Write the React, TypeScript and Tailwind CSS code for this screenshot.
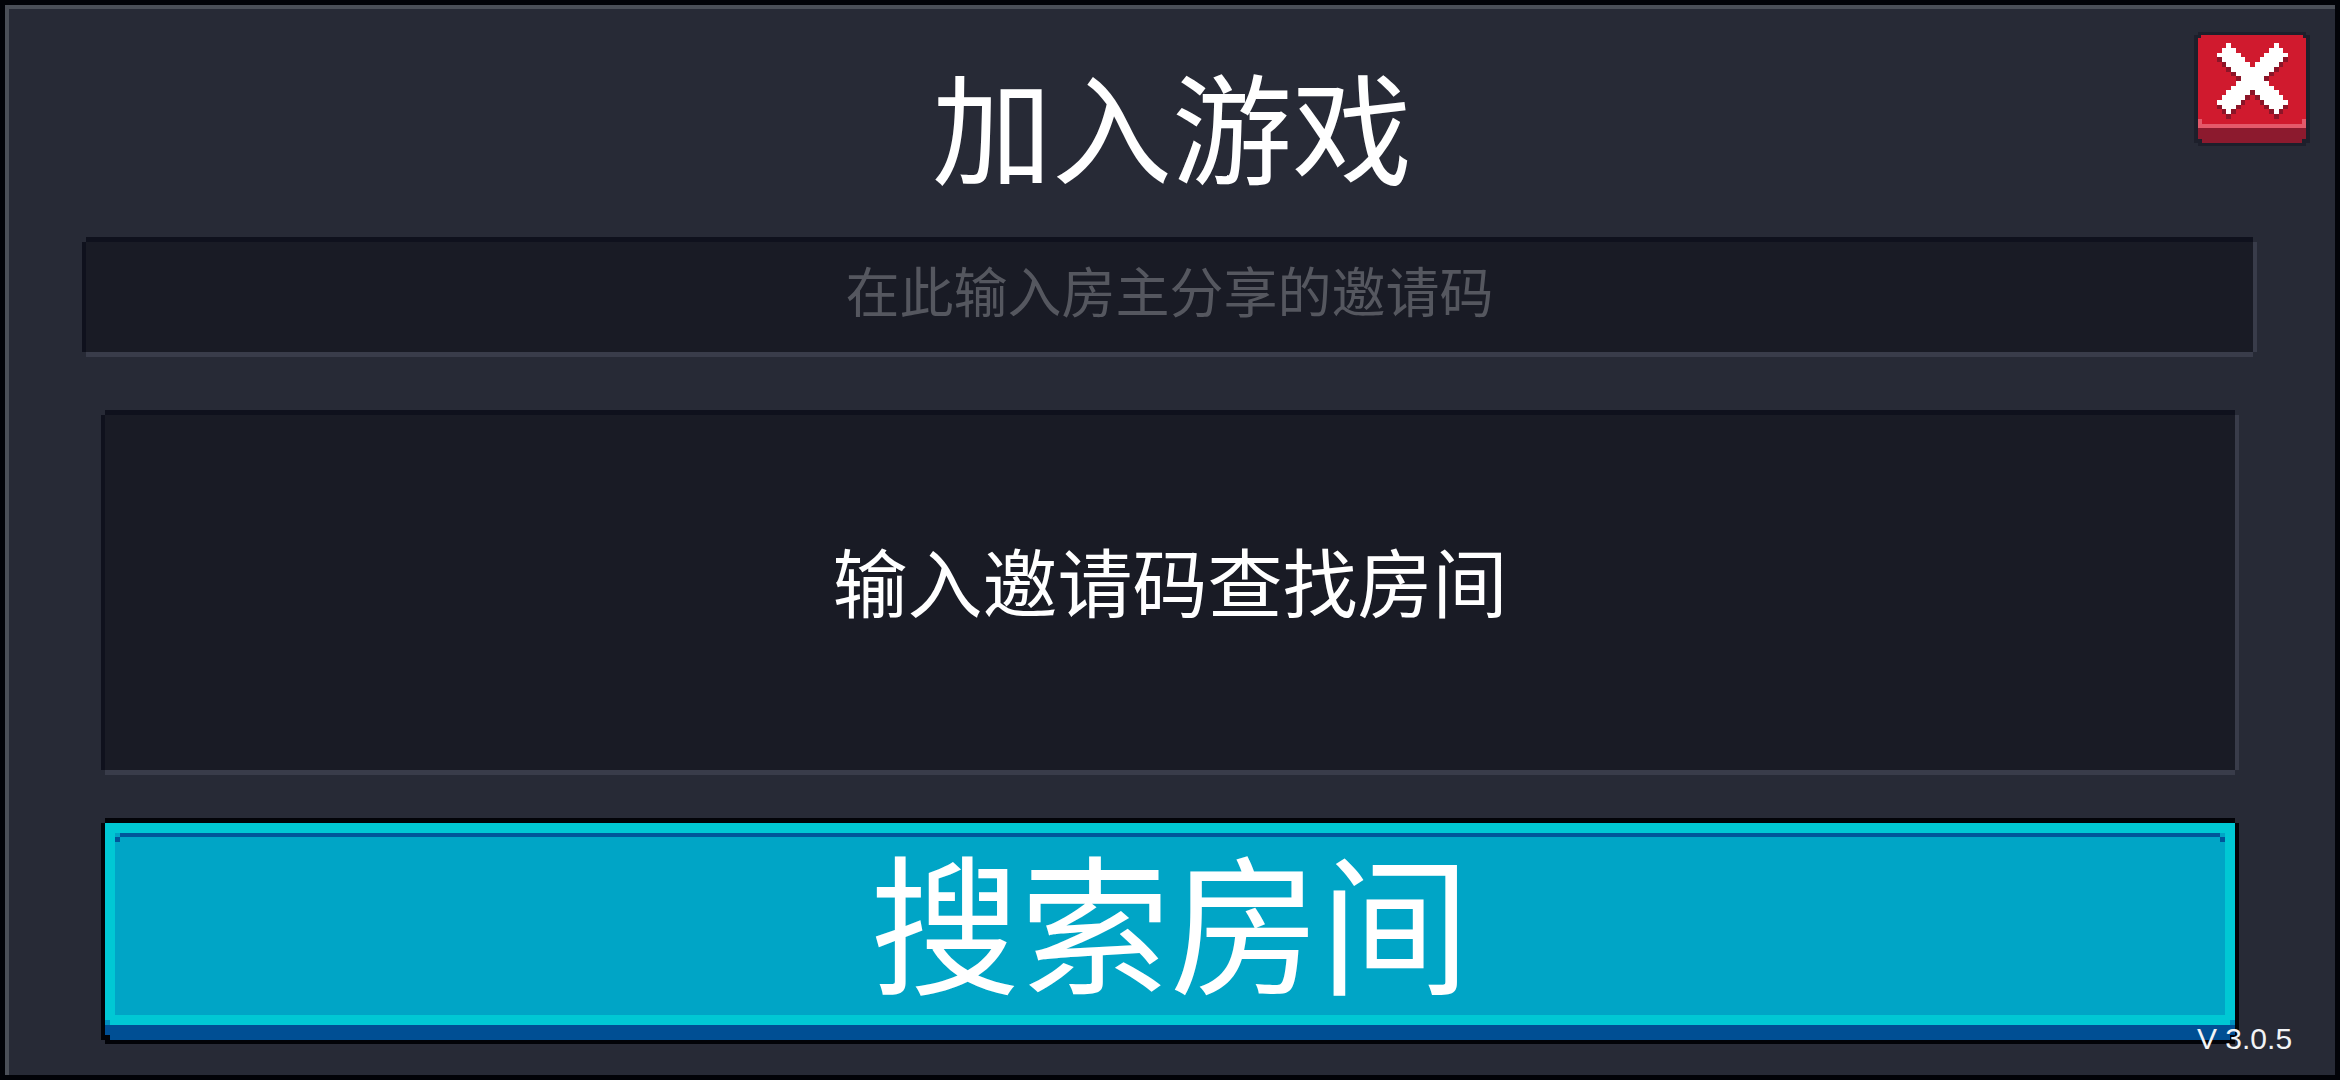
const CJK = 'font-["Noto_Sans_CJK_SC","Noto_Sans_CJK_JP",sans-serif]';

// 15x15 pixel cross, [from, to] runs per row
const CROSS: number[][][] = [
  [[2, 2], [12, 12]],
  [[1, 3], [11, 13]],
  [[0, 4], [10, 14]],
  [[1, 5], [9, 13]],
  [[2, 6], [8, 12]],
  [[3, 11]],
  [[4, 10]],
  [[5, 9]],
  [[4, 10]],
  [[3, 11]],
  [[2, 6], [8, 12]],
  [[1, 5], [9, 13]],
  [[0, 4], [10, 14]],
  [[1, 3], [11, 13]],
  [[2, 2], [12, 12]],
];

function CrossIcon() {
  const runs = (fill: string, dy: number) =>
    CROSS.flatMap((row, y) =>
      row.map(([a, b]) => (
        <rect key={`${fill}-${y}-${a}`} x={a} y={y + dy} width={b - a + 1} height={1} fill={fill} />
      )),
    );
  return (
    <svg viewBox="0 0 15 16" width={71} height={76} shapeRendering="crispEdges">
      {runs('#8c1528', 1)}
      {runs('#ffffff', 0)}
    </svg>
  );
}

function CloseButton() {
  return (
    <button
      type="button"
      aria-label="Close"
      className="absolute left-[2189px] top-[26px] flex h-[108px] w-[108px] flex-col bg-[#d01a2e] shadow-[-4px_0_0_#1d1f2b,4px_0_0_#1d1f2b,0_-3px_0_#1d1f2b,0_3px_0_#1d1f2b]"
    >
      <span className="flex h-[89px] w-full justify-center pt-[8px]">
        <CrossIcon />
      </span>
      <span className="h-[4px] w-full bg-[#e4596a]" />
      <span className="h-[15px] w-full bg-[#8c1a2e]" />
      {/* pixel steps on the lip */}
      <span className="absolute left-0 top-[84px] h-[5px] w-[4px] bg-[#e4596a]" />
      <span className="absolute right-0 top-[84px] h-[5px] w-[4px] bg-[#e4596a]" />
      <span className="absolute bottom-0 left-0 h-[4px] w-[4px] bg-[#1d1f2b]" />
      <span className="absolute bottom-0 right-0 h-[4px] w-[4px] bg-[#1d1f2b]" />
      <span className="absolute left-0 top-0 h-[3px] w-[3px] bg-[#1d1f2b]" />
      <span className="absolute right-0 top-0 h-[3px] w-[3px] bg-[#1d1f2b]" />
    </button>
  );
}

export default function App() {
  return (
    <div className="h-[1080px] w-[2340px] overflow-hidden bg-[#020308] p-[5px]">
      <div className={`relative flex h-[1070px] w-[2330px] flex-col border-l-[4px] border-t-[4px] border-[#4b4f58] bg-[#272a36] ${CJK}`}>
        <CloseButton />

        <h1 className="flex h-[233px] w-full items-center justify-center pb-[4px] text-[120px] font-normal leading-none text-white">
          加入游戏
        </h1>

        {/* Invite code field */}
        <div className="ml-[77px] flex h-[110px] w-[2167px] shrink-0 items-center justify-center bg-[#191b25] pb-[14px] text-[54px] leading-none text-[#55575f] shadow-[-4px_0_0_#0f111d,4px_0_0_#393c4a,0_-5px_0_#0f111d,0_5px_0_#393c4a]">
          在此输入房主分享的邀请码
        </div>

        {/* Room list, empty */}
        <div className="ml-[96px] mt-[63px] flex h-[355px] w-[2130px] shrink-0 items-center justify-center bg-[#191b25] pb-[26px] text-[75px] leading-none text-white shadow-[-4px_0_0_#0f111d,4px_0_0_#393c4a,0_-5px_0_#0f111d,0_5px_0_#393c4a]">
          输入邀请码查找房间
        </div>

        {/* Search button */}
        <button
          type="button"
          className="relative ml-[96px] mt-[53px] flex w-[2130px] shrink-0 flex-col shadow-[-4px_0_0_#020308,4px_0_0_#020308,0_-5px_0_#020308,0_4px_0_#020308]"
        >
          <span className="relative flex h-[202px] w-full flex-col border-[10px] border-[#00c8d4] bg-[#00a5c6]">
            <span className="mx-[5px] h-[4px] shrink-0 bg-[#00569a]" />
            <span className="absolute left-0 top-[4px] h-[5px] w-[5px] bg-[#00569a]" />
            <span className="absolute right-0 top-[4px] h-[5px] w-[5px] bg-[#00569a]" />
            <span className="flex w-full flex-1 items-center justify-center pb-[17px] text-[150px] leading-none text-white">
              搜索房间
            </span>
          </span>
          <span className="h-[15px] w-full bg-[#004f94]" />
          {/* pixel corners */}
          <span className="absolute bottom-[15px] left-0 h-[5px] w-[5px] bg-[#0090c0]" />
          <span className="absolute bottom-[15px] right-0 h-[5px] w-[5px] bg-[#0090c0]" />
          <span className="absolute bottom-0 left-0 h-[5px] w-[5px] bg-[#020308]" />
          <span className="absolute bottom-0 right-0 h-[5px] w-[5px] bg-[#020308]" />
        </button>

        <span className="absolute left-[2188px] top-[1015px] font-['Liberation_Sans',sans-serif] text-[30px] leading-none text-[#f2f4f6]">
          V 3.0.5
        </span>
      </div>
    </div>
  );
}
